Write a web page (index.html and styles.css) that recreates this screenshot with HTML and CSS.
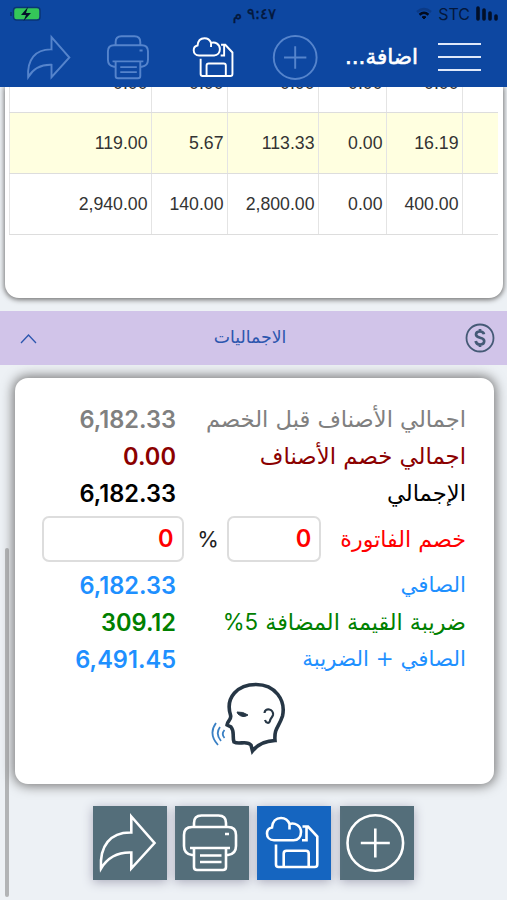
FILE: index.html
```html
<!DOCTYPE html>
<html lang="ar" dir="rtl">
<head>
<meta charset="utf-8">
<title>اضافة</title>
<link rel="stylesheet" href="styles.css">
</head>
<body>

<!-- shared icons -->
<svg class="defs" width="0" height="0">
    <symbol id="share" viewBox="0 0 74 74">
        <path d="M38.3 10.5L61.5 37L38.3 62.5V46.5C24 46 14 52.500 8 62.500C6.500 40 17 26 38.300 26.500Z"/>
    </symbol>
    <symbol id="print" viewBox="0 0 74 74">
        <path d="M19 21V17Q19 9.500 26.500 9.500H43.500Q51 9.500 51 17V21"/>
        <path d="M19 49H17Q9 48 9 40V29Q9 21 17 21H53Q61 21 61 29V40Q61 48 53 49H51M15 42H55"/>
        <path d="M19 42V61Q19 64 22 64H48Q51 64 51 61V42M25 49.500H46.500M25 56H46.500M50 28H54"/>
    </symbol>
    <symbol id="save" viewBox="0 0 74 74">
        <path d="M17 34.300C12.500 34.300 10 31 10 27.500C10 24 12.500 22 15 21.500C15.500 15.500 19 12 24 12C28 12 31 14 32.500 18C38 16 44 20 44 26C44 31 41 34.300 36.500 34.300ZM32.500 18V23.500"/>
        <path d="M45.500 20.500H51L60.300 30.500V58.500Q60.300 61 57.800 61H21.500Q19 61 19 58.500V38.500M49.500 21V34.300H45"/>
        <path d="M26.700 61V47.500Q26.700 44.700 29.500 44.700H49Q51.700 44.700 51.700 47.500V61"/>
    </symbol>
    <symbol id="add" viewBox="0 0 74 74">
        <circle cx="35.300" cy="37" r="27.800"/>
        <path d="M35.300 22.500V51.500M20.800 37H49.800"/>
    </symbol>
</svg>

<header class="header">
    <div class="status">
        <div class="carrier">
            <svg width="23" height="16" viewBox="0 0 23 16"><path d="M2 2V13M8 4V13M14 7V13M20 10V13" stroke="#020f28" stroke-width="3.600" stroke-linecap="round"/></svg>
            <span>STC</span>
            <svg class="wifi" width="18" height="14" viewBox="0 0 18 14"><path d="M2 5Q9-1 16 5" stroke="#0b3a86"/><path d="M4.500 7.700Q9 4 13.500 7.700" stroke="#020b1e"/><path d="M7 10L9 12L11 10Q9 8.500 7 10Z" fill="#020b1e" stroke="#020b1e" stroke-width="1"/></svg>
        </div>
        <div class="time">٩:٤٧ م</div>
        <svg class="battery" width="31" height="16" viewBox="0 0 31 16">
            <rect x="3.500" y="1.500" width="26.500" height="12.500" rx="3" fill="#34c759" stroke="#0a3474" stroke-width="1.500"/>
            <path d="M1 6V10" stroke="#0a3474" stroke-width="2"/>
            <path d="M18 1L11 9H16L13.500 15L21 7H16Z" fill="#04102a"/>
        </svg>
    </div>
    <nav class="toolbar">
        <div class="menu"><i></i><i></i><i></i></div>
        <h1 class="title">اضافة...</h1>
        <svg class="icon dim"><use href="#add"/></svg>
        <svg class="icon save"><use href="#save"/></svg>
        <svg class="icon dim"><use href="#print"/></svg>
        <svg class="icon dim"><use href="#share"/></svg>
    </nav>
</header>

<main class="content">
    <section class="items">
        <table class="grid">
            <colgroup><col class="c0"><col class="c1"><col class="c2"><col class="c3"><col class="c4"><col class="c5"></colgroup>
            <tr><td></td><td>0.00</td><td>0.00</td><td>0.00</td><td>0.00</td><td>0.00</td></tr>
            <tr class="alt"><td></td><td>16.19</td><td>0.00</td><td>113.33</td><td>5.67</td><td>119.00</td></tr>
            <tr><td></td><td>400.00</td><td>0.00</td><td>2,800.00</td><td>140.00</td><td>2,940.00</td></tr>
        </table>
    </section>

    <div class="section-bar">
        <svg width="30" height="30" viewBox="0 0 30 30"><circle cx="15" cy="15" r="13.500" fill="none" stroke="#455a76" stroke-width="1.800"/><path d="M19 11.200C18.500 9 17 8.500 15 8.500C12.500 8.500 11 9.700 11 11.600C11 16 19.200 13.500 19.200 18C19.200 20.300 17.500 21.500 15 21.500C12.500 21.500 11 20.300 10.700 18M15 6V9M15 21V24" fill="none" stroke="#455a76" stroke-width="2.700"/></svg>
        <span class="section-title">الاجماليات</span>
        <svg width="17" height="11" viewBox="0 0 17 11"><path d="M1 10L8.500 2L16 10" fill="none" stroke="#2c56ae" stroke-width="1.300"/></svg>
    </div>

    <section class="totals">
        <div class="row gray"><span class="label l1">اجمالي الأصناف قبل الخصم</span><b>6,182.33</b></div>
        <div class="row maroon"><span class="label l2">اجمالي خصم الأصناف</span><b>0.00</b></div>
        <div class="row black"><span class="label l3">الإجمالي</span><b>6,182.33</b></div>
        <div class="row discount red">
            <span class="label l4">خصم الفاتورة</span>
            <div class="field percent">0</div>
            <span class="sign">%</span>
            <div class="field amount">0</div>
        </div>
        <div class="row blue"><span class="label l5">الصافي</span><b>6,182.33</b></div>
        <div class="row green"><span class="label l6">ضريبة القيمة المضافة <span class="rate">5&rlm;%</span></span><b>309.12</b></div>
        <div class="row blue"><span class="label l7">الصافي + الضريبة</span><b>6,491.45</b></div>
        <svg class="speak" width="76" height="74" viewBox="0 0 76 74">
            <g fill="none" stroke="#263645" stroke-width="3.600">
                <path d="M20.500 34C15 16 28 3.500 46 3.500C65 3.500 76 19 72.500 35C69 46 64 47 65 59.500C56 60 48 63 42.500 70L41 64C37 59 29 64 24 61C22 55 25 51 21 46L17 44C17 40 22 39 20.500 34Z"/>
                <path d="M54.500 32C55 26 64 28 63 34C62 37 60 38 60 40C59 43 56 42 55 39" stroke-width="2.200"/>
                <path d="M27 31Q33 30.500 38 34Q33 37.500 28 33Z" fill="#263645" stroke-width="1"/>
            </g>
            <path d="M6 42Q-2 53 8 64M10 46Q5 53 11 60M14.500 49Q11 53 14.500 57" fill="none" stroke="#3a80c4" stroke-width="1.800"/>
        </svg>
    </section>

    <div class="actions">
        <a class="btn"><svg><use href="#add"/></svg></a>
        <a class="btn primary"><svg><use href="#save"/></svg></a>
        <a class="btn"><svg><use href="#print"/></svg></a>
        <a class="btn"><svg><use href="#share"/></svg></a>
    </div>
</main>
<div class="scrollbar"></div>

</body>
</html>
```
FILE: styles.css
```css
* {
    box-sizing: border-box;
}
body {
    margin: 0;
    width: 507px;
    height: 900px;
    overflow: hidden;
    background: #edf1f5;
    font-family: "DejaVu Sans", sans-serif;
}
.defs {
    position: absolute;
}
svg {
    display: block;
    flex: none;
}

/* header */
.header {
    height: 87px;
    background: #0d47a1;
    color: #fff;
}
.status {
    height: 28px;
    padding: 0 8px 0 10px;
    display: grid;
    grid-template-columns: 1fr auto 1fr;
    align-items: center;
    color: #04183c;
}
.carrier {
    display: flex;
    align-items: center;
    gap: 6px;
    font: 16px "Inter", sans-serif;
}
.carrier .wifi {
    margin-right: -1px;
    fill: none;
    stroke-width: 2.4;
}
.time {
    font-size: 15px;
    -webkit-text-stroke: 0.4px #04183c;
}
.battery {
    justify-self: end;
}
.toolbar {
    height: 58px;
    padding-right: 26px;
    display: flex;
    align-items: center;
}
.menu {
    width: 43px;
    flex: none;
    display: grid;
    gap: 11px;
}
.menu i {
    height: 2px;
    background: #dfe8fa;
}
.title {
    width: 74px;
    flex: none;
    margin: 0 20px 0 19px;
    font-size: 21.5px;
    line-height: 40px;
    font-weight: normal;
    -webkit-text-stroke: 0.6px #fff;
    white-space: nowrap;
}
.icon {
    width: 57px;
    height: 57px;
    margin-left: 25px;
    fill: none;
    stroke: #fff;
    stroke-width: 2.5;
}
.icon.save {
    margin-left: 28px;
}
.icon:nth-of-type(3) {
    margin-left: 22px;
}
.icon.dim {
    stroke: #5584cc;
}

/* items table */
.content {
    height: 813px;
    overflow: hidden;
}
.items {
    height: 211px;
    margin: 0 4px 0 5px;
    padding: 0 5px 0 4px;
    overflow: hidden;
    background: #fff;
    border-radius: 0 0 14px 14px;
    box-shadow: 0 1px 5px 1px #777;
}
.grid {
    width: 489px;
    margin-top: -36px;
    table-layout: fixed;
    border-collapse: collapse;
    font: 17.7px "Liberation Sans", sans-serif;
    color: #333;
}
.grid td {
    height: 61px;
    padding: 2px 3px 0 3px;
    direction: ltr;
    text-align: right;
    border-bottom: 1px solid #ddd;
    border-left: 1px solid #e4e4e4;
}
.grid tr:first-child td {
    padding-top: 4px;
}
.grid .alt {
    background: #ffffe0;
}
.c0 { width: 36px; }
.c1 { width: 76px; }
.c2 { width: 68px; }
.c3 { width: 91px; }
.c4 { width: 76px; }
.c5 { width: 142px; }

/* section header */
.section-bar {
    height: 54px;
    margin-top: 13px;
    padding: 0 12px 0 20px;
    display: flex;
    align-items: center;
    justify-content: space-between;
    background: #d1c4e9;
    color: #2c56ae;
    position: relative;
}
.section-title {
    padding: 0 2px 3px 0;
    font-size: 17.3px;
}

/* totals */
.totals {
    height: 406px;
    margin: 13px 13px 0 15px;
    padding: 22px 28px 0 27px;
    background: #fff;
    border-radius: 13px;
    box-shadow: 0 0 12px 2px #777;
}
.row {
    height: 37.2px;
    display: flex;
    align-items: center;
    justify-content: space-between;
    white-space: nowrap;
}
.row b {
    width: 134px;
    padding-top: 2px;
    direction: ltr;
    text-align: right;
    font: 600 23.6px "Inter", sans-serif;
}
.row.discount {
    height: 54px;
    justify-content: flex-start;
}
.l1 { font-size: 22.6px; }
.l2 { font-size: 22.8px; }
.l3 { font-size: 22.7px; }
.l4 { font-size: 22.2px; width: 126px; }
.l5 { font-size: 21.4px; }
.l6 { font-size: 22.3px; }
.l7 { font-size: 21.4px; }
.field {
    height: 46px;
    margin-top: 1px;
    padding: 0 8px;
    border: 2px solid #ddd;
    border-radius: 7px;
    font: 600 23.6px/42px "Inter", sans-serif;
}
.percent {
    width: 95px;
    margin-right: 19px;
}
.amount {
    width: 142px;
}
.sign {
    width: 43px;
    padding-left: 6px;
    text-align: center;
    color: #222;
    font: 22px "Inter", sans-serif;
}
.rate {
    font-family: "Inter", sans-serif;
}
.gray { color: #808080; }
.maroon { color: #8b0000; }
.black { color: #000; }
.red { color: #f00; }
.blue { color: #1e90ff; }
.green { color: #008000; }
.speak {
    margin: 4px 180px 0 0;
}

/* bottom buttons */
.actions {
    margin: 22px 93.5px 0 0;
    display: flex;
    gap: 8.2px;
}
.btn {
    width: 74px;
    height: 74px;
    background: #546e7a;
    box-shadow: 0 2px 10px #aab;
}
.btn.primary {
    background: #1565c0;
}
.btn svg {
    width: 74px;
    height: 74px;
    fill: none;
    stroke: #fff;
    stroke-width: 2.6;
}
.scrollbar {
    position: absolute;
    left: 5px;
    top: 548px;
    width: 4px;
    height: 349px;
    border-radius: 2px;
    background: rgba(120, 120, 120, .5);
}
```
